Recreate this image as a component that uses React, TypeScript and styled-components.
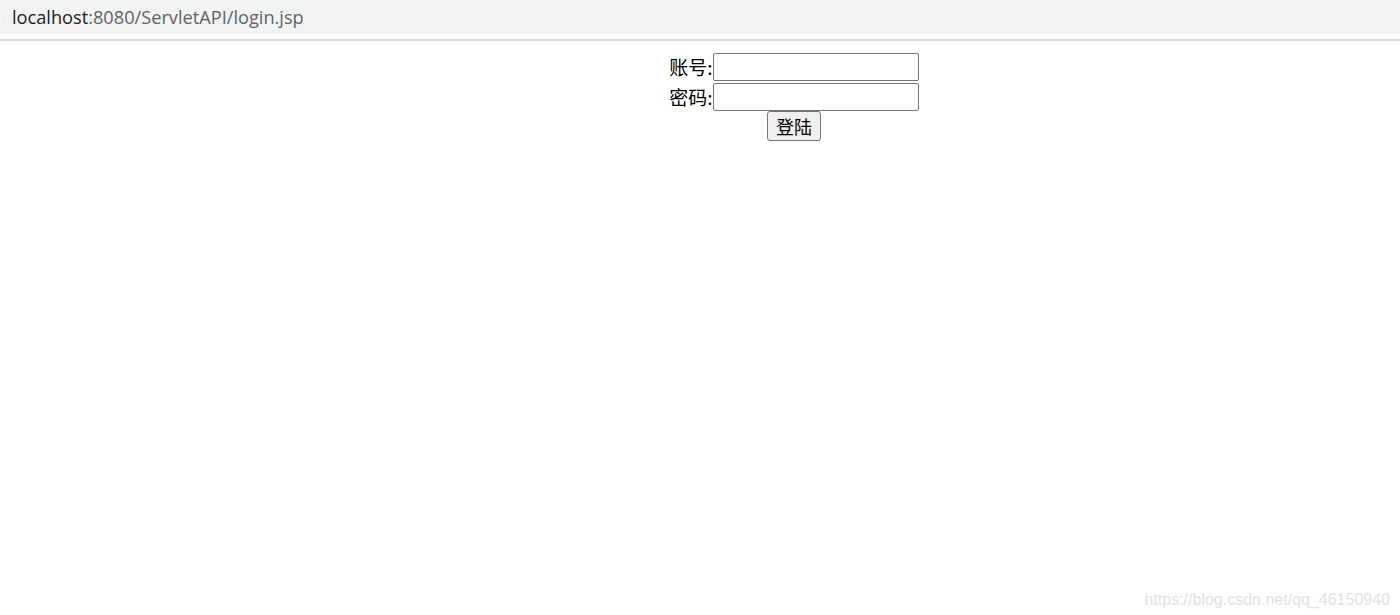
import React from 'react'
import styled, { createGlobalStyle } from 'styled-components'

const GlobalStyle = createGlobalStyle`
  html, body {
    margin: 0;
    padding: 0;
    background: #ffffff;
  }
  body {
    font-family: "Noto Sans CJK SC", "Noto Sans", sans-serif;
  }
`

const App = () => (
  <>
    <GlobalStyle />
    <Page>
      <AddressBar>
        <Host>localhost</Host>
        <Path>:8080/ServletAPI/login.jsp</Path>
      </AddressBar>
      <Divider />
      <Content>
        <LoginForm onSubmit={e => e.preventDefault()}>
          <Row>
            <Label>账号:</Label>
            <Field type="text" />
          </Row>
          <Row>
            <Label>密码:</Label>
            <Field type="password" />
          </Row>
          <Submit type="submit">登陆</Submit>
        </LoginForm>
      </Content>
      <Watermark>https://blog.csdn.net/qq_46150940</Watermark>
    </Page>
  </>
)

export default App

const Page = styled.div`
  position: relative;
  width: 1400px;
  height: 615px;
  overflow: hidden;
`

const AddressBar = styled.div`
  display: flex;
  align-items: center;
  height: 34px;
  padding: 0 0 0 12px;
  background: #f1f3f4;
  font-family: "Open Sans", "Noto Sans", sans-serif;
  font-size: 18.2px;
`

const Host = styled.span`
  color: #202124;
`

const Path = styled.span`
  color: #5f6368;
`

const Divider = styled.div`
  height: 2px;
  margin-top: 5px;
  background: #dadce0;
`

const Content = styled.div`
  display: flex;
  justify-content: center;
  padding: 12px 0 0 188px;
`

const LoginForm = styled.form`
  display: flex;
  flex-direction: column;
  align-items: center;
  margin: 0;
`

const Row = styled.div`
  display: flex;
  align-items: center;
  height: 28px;
  &:first-child {
    margin-bottom: 2px;
  }
`

const Label = styled.span`
  font-family: "Noto Sans CJK SC", sans-serif;
  font-size: 19px;
  line-height: 28px;
  color: #000000;
`

const Field = styled.input`
  box-sizing: border-box;
  width: 206px;
  height: 28px;
  margin: 0;
  padding: 1px 3px;
  border: 1px solid #767676;
  border-radius: 2px;
  font-size: 16px;
  background: #ffffff;
`

const Submit = styled.button`
  box-sizing: border-box;
  width: 54px;
  height: 30px;
  margin: 0;
  padding: 0;
  border: 1px solid #767676;
  border-radius: 3px;
  background: #efefef;
  font-family: "Noto Sans CJK SC", sans-serif;
  font-size: 18px;
  line-height: 26px;
  color: #000000;
`

const Watermark = styled.div`
  position: absolute;
  right: 10px;
  bottom: 6px;
  font-family: "Liberation Sans", Arial, sans-serif;
  font-size: 16px;
  color: #e3e3e3;
`
